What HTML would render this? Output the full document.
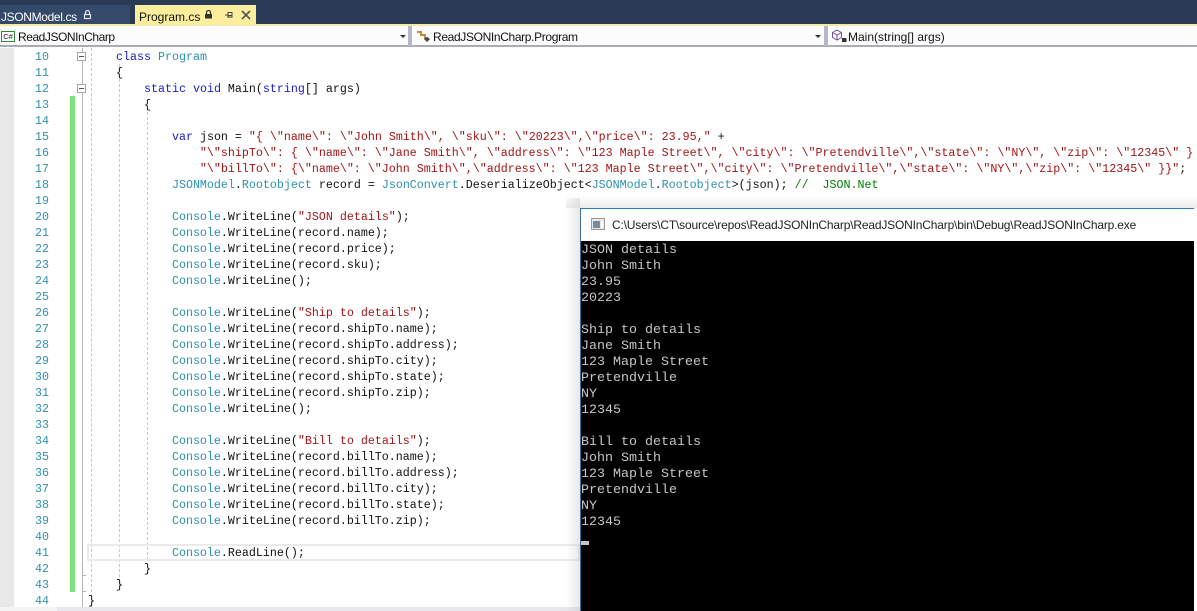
<!DOCTYPE html>
<html>
<head>
<meta charset="utf-8">
<style>
html,body{margin:0;padding:0;width:1197px;height:611px;overflow:hidden;background:#fff}
body{position:relative;font-family:"Liberation Sans",sans-serif}
.a{position:absolute}
.top{left:0;top:0;width:1197px;height:24px;background:#2a3b56}
.tabl{left:0;top:5px;width:130px;height:19px;background:#35496a}
.tabr{left:135px;top:5px;width:121px;height:19px;background:#fcee9d}
.gold{left:0;top:24px;width:1197px;height:2px;background:#f5e9a6}
.t{font-size:13px;line-height:18px;white-space:nowrap}
.bar{left:0;top:26px;width:1197px;background:#fcfcfd;border-bottom:2px solid #a9acb8;box-sizing:content-box;height:19px}
.sep{top:26px;width:4px;height:20px;background:#b4b8c8}
.gut{left:0;top:48px;width:14px;height:559px;background:#e8e8e8}
.green{left:70px;top:96px;width:5px;height:496px;background:#7be27b}
.vl{left:82px;top:48px;width:1px;height:559px;background:#b5b5b5}
.dash{width:0;border-left:1px dashed #c8c8c8}
.ln{left:14px;width:35px;margin-top:1px;text-align:right;font:11.67px/16px "Liberation Mono",monospace;color:#2b91af}
.c{left:88px;margin-top:1px;font:11.67px/16px "Liberation Mono",monospace;color:#111;white-space:pre}
.k{color:#1a1ad0}.y{color:#2b91af}.s{color:#a31515}.g{color:#008000}
.box{left:77px;width:9px;height:9px;border:1px solid #a5a5a5;background:#fff;box-sizing:border-box}
.box:after{content:"";position:absolute;left:1px;top:3px;width:5px;height:1px;background:#555}
.cur{left:87px;top:544px;width:493px;height:17px;border:2px solid #eaeaea;box-sizing:border-box}
.sb{left:0;top:607px;width:580px;height:4px;background:#e8e8ec}
.sb2{left:0;top:607px;width:57px;height:4px;background:#f4f4f4}
.shadow{left:566px;top:198px;width:14px;height:413px;background:linear-gradient(to right,rgba(200,200,200,0),rgba(190,190,190,.35))}
.shadow2{left:566px;top:196px;width:631px;height:12px;background:linear-gradient(to bottom,rgba(200,200,200,0),rgba(190,190,190,.3))}
.win{left:580px;top:208px;width:614px;height:403px;background:#000;border-top:1px solid #2b7bc0;border-left:1px solid #3f6f9f;box-sizing:border-box}
.tb{left:0;top:0;width:613px;height:32px;background:#fff}
.con{left:0;top:34px;color:#c6c6c6;font:13.33px/16px "Liberation Mono",monospace;white-space:pre}
</style>
</head>
<body>
<div class="a top"></div>
<div class="a tabl"></div>
<div class="a tabr"></div>
<div class="a t" style="left:1px;top:8px;color:#fff;font-size:12px;letter-spacing:-.35px">JSONModel.cs</div>
<svg class="a" style="left:83px;top:10px" width="9" height="10"><path d="M2.500 4V2.500a2 2 0 0 1 4 0V4M1.500 4.500h6v4h-6z" fill="none" stroke="#dfe3ea" stroke-width="1.200"/></svg>
<div class="a t" style="left:139px;top:8px;color:#111;font-size:12px">Program.cs</div>
<svg class="a" style="left:204px;top:10px" width="9" height="10"><path d="M2.500 4V2.500a2 2 0 0 1 4 0V4" fill="none" stroke="#333" stroke-width="1.200"/><rect x="1" y="4" width="7" height="4.500" fill="#333"/></svg>
<svg class="a" style="left:224px;top:10px" width="11" height="10"><path d="M1 5h3M4 2v6M4 2.500h4v4.500H4M4 5.500h4" fill="none" stroke="#444" stroke-width="1"/></svg>
<svg class="a" style="left:241px;top:10px" width="11" height="11"><path d="M1 1l8 8M9 1l-8 8" fill="none" stroke="#555" stroke-width="1.600"/></svg>
<div class="a gold"></div>

<div class="a bar"></div>
<div class="a" style="left:1px;top:31px;width:12px;height:9px;border:1px solid #2f8a32;font:7.500px/9px 'Liberation Sans',sans-serif;color:#222;text-align:center;background:#fff">C#</div>
<div class="a t" style="left:18px;top:28px;color:#111;font-size:12px;letter-spacing:-.45px">ReadJSONInCharp</div>
<div class="a" style="left:400px;top:35px;border:3px solid transparent;border-top:3px solid #333"></div>
<div class="a sep" style="left:408px"></div>
<svg class="a" style="left:415px;top:29px" width="16" height="14"><path d="M2 3h4v3h4v3h3" fill="none" stroke="#c08a3a" stroke-width="2"/><path d="M9 10l3-2 3 2-3 3z" fill="#444"/></svg>
<div class="a t" style="left:433px;top:28px;color:#111;font-size:12px;letter-spacing:-.35px">ReadJSONInCharp.Program</div>
<div class="a" style="left:815px;top:35px;border:3px solid transparent;border-top:3px solid #333"></div>
<div class="a sep" style="left:824px"></div>
<svg class="a" style="left:831px;top:29px" width="17" height="15"><path d="M6 1l4.500 2.500v5L6 11 1.500 8.500v-5zM1.500 3.500L6 6l4.500-2.500M6 6v5" fill="none" stroke="#7a4f9e" stroke-width="1"/><rect x="11" y="9" width="4.500" height="4" fill="#333"/></svg>
<div class="a t" style="left:848px;top:28px;color:#111;font-size:12px">Main(string[] args)</div>

<div class="a gut"></div>
<div class="a green"></div>
<div class="a vl"></div>
<div class="a dash" style="left:91px;top:48px;height:559px"></div>
<div class="a dash" style="left:119px;top:64px;height:523px"></div>
<div class="a dash" style="left:147px;top:112px;height:448px"></div>
<div class="a box" style="top:52px"></div>
<div class="a box" style="top:84px"></div>
<div class="a" style="left:82px;top:575px;width:4px;height:1px;background:#b5b5b5"></div>
<div class="a" style="left:82px;top:591px;width:4px;height:1px;background:#b5b5b5"></div>
<div class="a cur"></div>

<div class="a ln" style="top:48px">10</div><div class="a ln" style="top:64px">11</div><div class="a ln" style="top:80px">12</div><div class="a ln" style="top:96px">13</div><div class="a ln" style="top:112px">14</div><div class="a ln" style="top:128px">15</div><div class="a ln" style="top:144px">16</div><div class="a ln" style="top:160px">17</div><div class="a ln" style="top:176px">18</div><div class="a ln" style="top:192px">19</div><div class="a ln" style="top:208px">20</div><div class="a ln" style="top:224px">21</div><div class="a ln" style="top:240px">22</div><div class="a ln" style="top:256px">23</div><div class="a ln" style="top:272px">24</div><div class="a ln" style="top:288px">25</div><div class="a ln" style="top:304px">26</div><div class="a ln" style="top:320px">27</div><div class="a ln" style="top:336px">28</div><div class="a ln" style="top:352px">29</div><div class="a ln" style="top:368px">30</div><div class="a ln" style="top:384px">31</div><div class="a ln" style="top:400px">32</div><div class="a ln" style="top:416px">33</div><div class="a ln" style="top:432px">34</div><div class="a ln" style="top:448px">35</div><div class="a ln" style="top:464px">36</div><div class="a ln" style="top:480px">37</div><div class="a ln" style="top:496px">38</div><div class="a ln" style="top:512px">39</div><div class="a ln" style="top:528px">40</div><div class="a ln" style="top:544px">41</div><div class="a ln" style="top:560px">42</div><div class="a ln" style="top:576px">43</div><div class="a ln" style="top:592px">44</div>

<div class="a c" style="top:48px">    <span class="k">class</span> <span class="y">Program</span></div>
<div class="a c" style="top:64px">    {</div>
<div class="a c" style="top:80px">        <span class="k">static</span> <span class="k">void</span> Main(<span class="k">string</span>[] args)</div>
<div class="a c" style="top:96px">        {</div>
<div class="a c" style="top:128px">            <span class="k">var</span> json = <span class="s">"{ \"name\": \"John Smith\", \"sku\": \"20223\",\"price\": 23.95,"</span> +</div>
<div class="a c" style="top:144px">                <span class="s">"\"shipTo\": { \"name\": \"Jane Smith\", \"address\": \"123 Maple Street\", \"city\": \"Pretendville\",\"state\": \"NY\", \"zip\": \"12345\" }</span></div>
<div class="a c" style="top:160px">                <span class="s">"\"billTo\": {\"name\": \"John Smith\",\"address\": \"123 Maple Street\",\"city\": \"Pretendville\",\"state\": \"NY\",\"zip\": \"12345\" }}"</span>;</div>
<div class="a c" style="top:176px">            <span class="y">JSONModel</span>.<span class="y">Rootobject</span> record = <span class="y">JsonConvert</span>.DeserializeObject&lt;<span class="y">JSONModel</span>.<span class="y">Rootobject</span>&gt;(json); <span class="g">//  JSON.Net</span></div>
<div class="a c" style="top:208px">            <span class="y">Console</span>.WriteLine(<span class="s">"JSON details"</span>);</div>
<div class="a c" style="top:224px">            <span class="y">Console</span>.WriteLine(record.name);</div>
<div class="a c" style="top:240px">            <span class="y">Console</span>.WriteLine(record.price);</div>
<div class="a c" style="top:256px">            <span class="y">Console</span>.WriteLine(record.sku);</div>
<div class="a c" style="top:272px">            <span class="y">Console</span>.WriteLine();</div>
<div class="a c" style="top:304px">            <span class="y">Console</span>.WriteLine(<span class="s">"Ship to details"</span>);</div>
<div class="a c" style="top:320px">            <span class="y">Console</span>.WriteLine(record.shipTo.name);</div>
<div class="a c" style="top:336px">            <span class="y">Console</span>.WriteLine(record.shipTo.address);</div>
<div class="a c" style="top:352px">            <span class="y">Console</span>.WriteLine(record.shipTo.city);</div>
<div class="a c" style="top:368px">            <span class="y">Console</span>.WriteLine(record.shipTo.state);</div>
<div class="a c" style="top:384px">            <span class="y">Console</span>.WriteLine(record.shipTo.zip);</div>
<div class="a c" style="top:400px">            <span class="y">Console</span>.WriteLine();</div>
<div class="a c" style="top:432px">            <span class="y">Console</span>.WriteLine(<span class="s">"Bill to details"</span>);</div>
<div class="a c" style="top:448px">            <span class="y">Console</span>.WriteLine(record.billTo.name);</div>
<div class="a c" style="top:464px">            <span class="y">Console</span>.WriteLine(record.billTo.address);</div>
<div class="a c" style="top:480px">            <span class="y">Console</span>.WriteLine(record.billTo.city);</div>
<div class="a c" style="top:496px">            <span class="y">Console</span>.WriteLine(record.billTo.state);</div>
<div class="a c" style="top:512px">            <span class="y">Console</span>.WriteLine(record.billTo.zip);</div>
<div class="a c" style="top:544px">            <span class="y">Console</span>.ReadLine();</div>
<div class="a c" style="top:560px">        }</div>
<div class="a c" style="top:576px">    }</div>
<div class="a c" style="top:592px">}</div>
<div class="a sb"></div>
<div class="a sb2"></div>

<div class="a shadow2"></div>
<div class="a shadow"></div>
<div class="a win">
  <div class="a tb"></div>
  <svg class="a" style="left:10px;top:9px" width="15" height="13"><rect x=".5" y=".5" width="13" height="11" fill="#e8e8e8" stroke="#999"/><rect x="2" y="3" width="7" height="7" fill="#7a8a96"/><rect x="10" y="3" width="2" height="7" fill="#fff"/></svg>
  <div class="a t" style="left:31px;top:7px;color:#222;font-size:12px;letter-spacing:-.18px">C:\Users\CT\source\repos\ReadJSONInCharp\ReadJSONInCharp\bin\Debug\ReadJSONInCharp.exe</div>
  <div class="a con">JSON details
John Smith
23.95
20223

Ship to details
Jane Smith
123 Maple Street
Pretendville
NY
12345

Bill to details
John Smith
123 Maple Street
Pretendville
NY
12345</div>
  <div class="a" style="left:0;top:332px;width:8px;height:4px;background:#c6c6c6"></div>
</div>
</body>
</html>
